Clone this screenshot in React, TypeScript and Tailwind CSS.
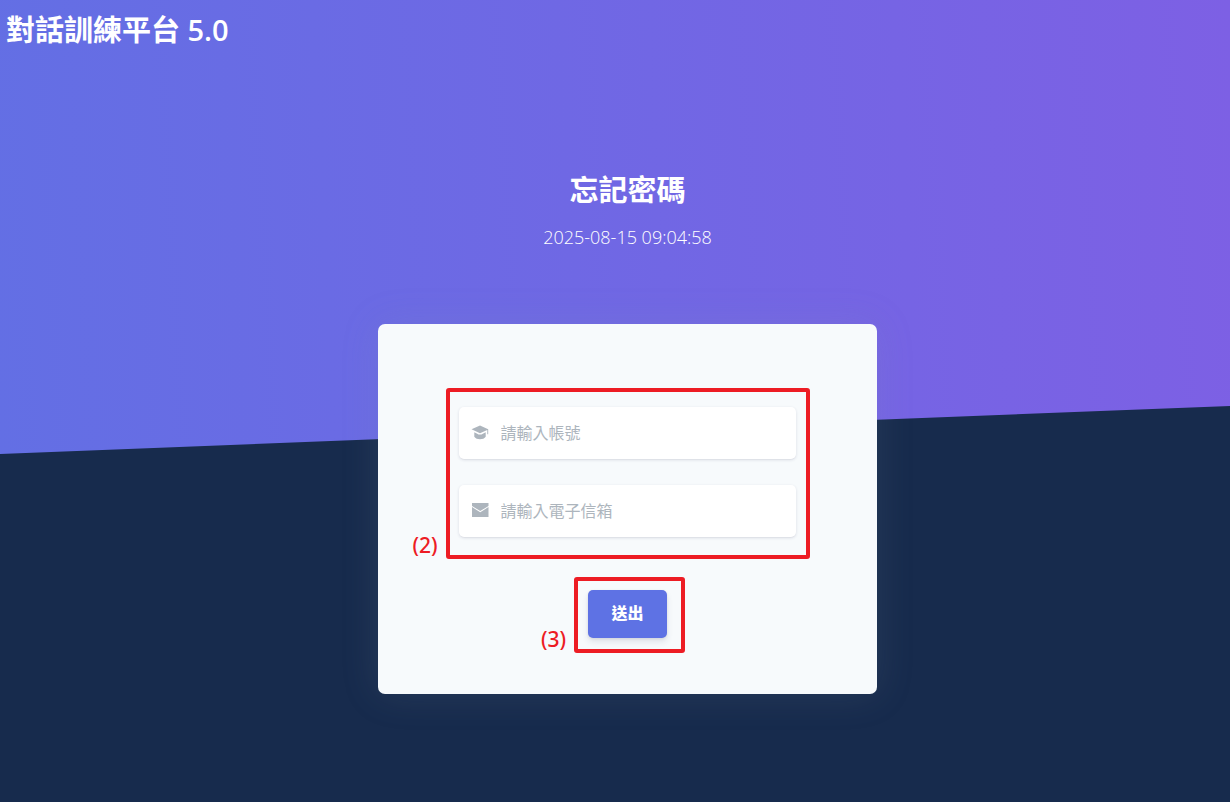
import type { ReactNode } from "react";

function GraduationIcon() {
  return (
    <svg viewBox="0 0 18 16" className="h-4 w-[18px] shrink-0" fill="currentColor" aria-hidden="true">
      <path d="M9 .5.5 4.300 9 8.300l7.300-3.400v4.400h.9V4.300Z" />
      <path d="M3.300 7.200 6.200 8.700c1.500 1.200 4.100 1.200 5.600 0l2.900-1.500v4.600c-1 1.700-3.400 2.500-5.700 2.500s-4.700-.8-5.700-2.500Z" />
    </svg>
  );
}

function EnvelopeIcon() {
  return (
    <svg viewBox="0 0 18 16" className="h-4 w-[18px] shrink-0" fill="currentColor" aria-hidden="true">
      <path d="M1 0h16.500v2.900L9.250 8.100 1 2.900Z" />
      <path d="M1 4.100 9.250 9.300l8.250-5.200V14H1Z" />
    </svg>
  );
}

function Field({ id, type, label, icon }: { id: string; type: string; label: string; icon: ReactNode }) {
  return (
    <label
      htmlFor={id}
      className="flex h-[52px] items-center gap-3 rounded-[5px] bg-white px-3 text-[#adb5bd] shadow-[0_1px_3px_rgba(50,50,93,0.15),0_1px_0_rgba(0,0,0,0.02)]"
    >
      {icon}
      <input
        id={id}
        type={type}
        placeholder={label}
        aria-label={label}
        className="min-w-0 flex-1 bg-transparent text-base text-[#8898aa] outline-none placeholder:text-[#adb5bd]"
      />
    </label>
  );
}

function Callout({ label, className, children }: { label: string; className: string; children: ReactNode }) {
  return (
    <div className={`relative rounded-[3px] border-4 border-[#ed1c24] ${className}`}>
      {children}
      <span className="absolute right-full bottom-0 mr-3 font-['Noto_Sans',sans-serif] text-[21px] leading-5 font-medium text-[#ed1c24]">
        {label}
      </span>
    </div>
  );
}

export default function App() {
  return (
    <div className="relative isolate min-h-screen overflow-hidden bg-[#172b4d] font-['Open_Sans','Noto_Sans_CJK_TC',sans-serif] text-white">
      <div className="absolute inset-x-0 top-0 -z-10 h-[454px] bg-linear-[87deg,#636fe4,#7d60e4] [clip-path:polygon(0_0,100%_0,100%_calc(100%_-_48px),0_100%)]" />
      <header className="px-1.5 pt-2">
        <h1 className="text-[29px] leading-11 font-semibold">對話訓練平台 5.0</h1>
      </header>
      <main className="flex flex-col items-center pt-[116px] pl-[25px]">
        <h2 className="text-[29px] leading-11 font-semibold">忘記密碼</h2>
        <p className="mt-[9px] text-lg leading-8 font-light">2025-08-15 09:04:58</p>
        <form
          onSubmit={(event) => event.preventDefault()}
          className="mt-[71px] flex w-full max-w-[499px] flex-col items-center rounded-[7px] bg-[#f7fafc] pt-16 pb-[41px] shadow-[0_0_38px_rgba(136,152,170,0.15)]"
        >
          <Callout label="(2)" className="w-[364px] pt-[15px] pr-[10px] pb-[18px] pl-[9px]">
            <div className="flex flex-col gap-[26px]">
              <Field id="account" type="text" label="請輸入帳號" icon={<GraduationIcon />} />
              <Field id="email" type="email" label="請輸入電子信箱" icon={<EnvelopeIcon />} />
            </div>
          </Callout>
          <Callout label="(3)" className="mt-[18px] ml-1 pt-[9px] pr-[14px] pb-[11px] pl-[10px]">
            <button
              type="submit"
              className="block h-12 w-[79px] rounded-[5px] bg-[#5e72e4] pb-0.5 text-base font-extrabold shadow-[0_4px_6px_rgba(50,50,93,0.11),0_1px_3px_rgba(0,0,0,0.08)]"
            >
              送出
            </button>
          </Callout>
        </form>
      </main>
    </div>
  );
}
